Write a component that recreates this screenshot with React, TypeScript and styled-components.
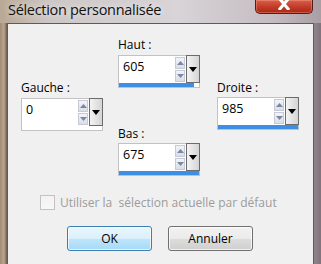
import React from "react";
import styled, { createGlobalStyle } from "styled-components";

const GlobalStyle = createGlobalStyle`
    html, body {
        margin: 0;
        padding: 0;
        background: #8f8489;
    }
    body {
        font-family: "Open Sans", "Noto Sans", sans-serif;
    }
`;

const Window = styled.div`
    width: 321px;
    height: 264px;
    overflow: hidden;
    display: flex;
    flex-direction: column;
    background: linear-gradient(to right, #a48c74 0px, #b9a690 4px, #6d5d4e 7px, #c9c3c6 40%, #d3cfd3 70%, #9d9299 96%, #7f747b 100%);
`;

const TitleBar = styled.div`
    height: 23px;
    flex: none;
    display: flex;
    justify-content: space-between;
    align-items: flex-start;
    padding: 0 8px;
    box-sizing: border-box;
    background: linear-gradient(to right, #b8a894 0%, #cdc6c6 15%, #d8d4d7 55%, #c5bcc1 85%, #a89ea4 100%);
`;

const Title = styled.span`
    font-size: 14.5px;
    letter-spacing: -0.3px;
    line-height: 19px;
    color: #111;
    text-shadow: 0 0 6px rgba(255, 255, 255, 0.9);
`;

const CloseButton = styled.div`
    width: 58px;
    height: 14px;
    box-sizing: border-box;
    border: 1px solid #4e1f19;
    border-top: none;
    border-radius: 0 0 5px 5px;
    background: linear-gradient(#d9604b, #c13a27 55%, #a92717);
    display: flex;
    justify-content: center;
    align-items: flex-start;
    box-shadow: inset 0 0 0 1px rgba(255, 180, 160, 0.35);
`;

const Client = styled.div`
    flex: 1;
    margin: 0 7px;
    border: 1px solid #5e5a5c;
    border-bottom: none;
    background: #f0f0f0;
    display: flex;
    flex-direction: column;
    font-size: 12px;
    color: #000;
`;

const Fields = styled.div`
    display: grid;
    grid-template-columns: 97px 99px 82px;
    padding: 13px 0 0 13px;
`;

const Column = styled.div<{ $top: number }>`
    display: flex;
    flex-direction: column;
    padding-top: ${(p) => p.$top}px;
`;

const Label = styled.div<{ $gap?: number; $above?: number }>`
    line-height: 16px;
    height: 16px;
    margin-top: ${(p) => p.$above ?? 0}px;
    margin-bottom: ${(p) => p.$gap ?? 2}px;
    white-space: pre;
`;

const FieldBox = styled.div`
    width: 82px;
    box-sizing: border-box;
    border: 1px solid #c2c2c2;
    background: #fff;
    display: flex;
    flex-direction: column;
`;

const FieldRow = styled.div`
    display: flex;
    height: 27px;
`;

const Value = styled.span`
    flex: 1;
    padding: 3px 0 0 4px;
    font-size: 12.5px;
    line-height: 16px;
`;

const Spin = styled.div`
    width: 10px;
    display: flex;
    flex-direction: column;
    gap: 1px;
    padding: 1px 1px 1px 0;
`;

const SpinButton = styled.div`
    flex: 1;
    border: 1px solid #c5cad6;
    background: linear-gradient(#f2f4f8, #d9dee8);
    display: flex;
    align-items: center;
    justify-content: center;
`;

const DropButton = styled.div`
    width: 12px;
    margin: -1px -1px 0 0;
    border: 1px solid #6c6c6c;
    background: linear-gradient(to right, #f4f4f4, #d4d4d4);
    display: flex;
    justify-content: center;
    align-items: center;
`;

const Bar = styled.div<{ $w: number }>`
    height: 4px;
    width: ${(p) => p.$w}px;
    background: ${(p) => (p.$w > 0 ? "#3c8fe4" : "transparent")};
`;

const CheckRow = styled.div`
    display: flex;
    align-items: center;
    gap: 5px;
    margin: 18px 0 0 32px;
    color: #9c9c9c;
    white-space: pre;
`;

const CheckBox = styled.div`
    width: 13px;
    height: 13px;
    border: 1px solid #c3c3c3;
    background: linear-gradient(#f2f2f2, #f8f8f8);
`;

const Buttons = styled.div`
    display: flex;
    gap: 16px;
    margin: 15px 0 0 59px;
`;

const Button = styled.div<{ $default?: boolean }>`
    width: 85px;
    height: 25px;
    box-sizing: border-box;
    border-radius: 3px;
    display: flex;
    align-items: center;
    justify-content: center;
    font-size: 12px;
    border: 1px solid ${(p) => (p.$default ? "#3c7fb1" : "#707070")};
    background: ${(p) =>
        p.$default
            ? "linear-gradient(#eaf6fd 0%, #d9f0fc 50%, #bee6fd 51%, #a7d9f5 100%)"
            : "linear-gradient(#f2f2f2 0%, #ebebeb 50%, #dddddd 51%, #cfcfcf 100%)"};
    box-shadow: inset 0 0 0 1px rgba(255, 255, 255, 0.7);
`;

const Up = () => (
    <svg width="7" height="4" viewBox="0 0 7 4">
        <path d="M0 4 L3.5 0 L7 4 Z" fill="#7a86a4" />
    </svg>
);

const Down = () => (
    <svg width="7" height="4" viewBox="0 0 7 4">
        <path d="M0 0 L3.5 4 L7 0 Z" fill="#7a86a4" />
    </svg>
);

const SpinField = ({ value, bar }: { value: string; bar: number }) => (
    <FieldBox>
        <FieldRow>
            <Value>{value}</Value>
            <Spin>
                <SpinButton>
                    <Up />
                </SpinButton>
                <SpinButton>
                    <Down />
                </SpinButton>
            </Spin>
            <DropButton>
                <svg width="8" height="5" viewBox="0 0 8 5">
                    <path d="M0 0 L8 0 L4 5 Z" fill="#000" />
                </svg>
            </DropButton>
        </FieldRow>
        <Bar $w={bar} />
    </FieldBox>
);

const App = () => {
    return (
        <Window>
            <GlobalStyle />
            <TitleBar>
                <Title>Sélection personnalisée</Title>
                <CloseButton>
                    <svg width="14" height="10" viewBox="0 0 14 10">
                        <path d="M2 -2 L12 10 M12 -2 L2 10" stroke="#fff" strokeWidth="3" />
                    </svg>
                </CloseButton>
            </TitleBar>
            <Client>
                <Fields>
                    <Column $top={43}>
                        <Label>Gauche :</Label>
                        <SpinField value="0" bar={0} />
                    </Column>
                    <Column $top={0}>
                        <Label>Haut :</Label>
                        <SpinField value="605" bar={75} />
                        <Label $gap={1} $above={38}>
                            Bas :
                        </Label>
                        <SpinField value="675" bar={80} />
                    </Column>
                    <Column $top={43}>
                        <Label $gap={1}>Droite :</Label>
                        <SpinField value="985" bar={80} />
                    </Column>
                </Fields>
                <CheckRow>
                    <CheckBox />
                    <span>Utiliser la  sélection actuelle par défaut</span>
                </CheckRow>
                <Buttons>
                    <Button $default>OK</Button>
                    <Button>Annuler</Button>
                </Buttons>
            </Client>
        </Window>
    );
};

export default App;
